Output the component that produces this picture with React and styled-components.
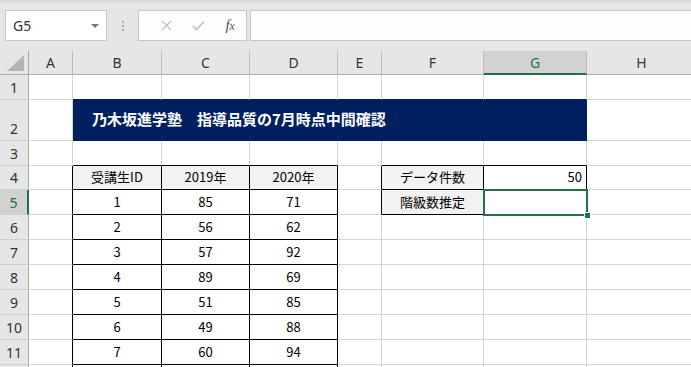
import React from "react";
import styled, { createGlobalStyle } from "styled-components";

const GRID = "#d4d4d4";
const BLACK = "#000";
const NAVY = "#002060";
const GREEN = "#217346";

const GlobalStyle = createGlobalStyle`
  body {
    margin: 0;
    background: #fff;
    font-family: "Noto Sans", "Noto Sans CJK JP", sans-serif;
    overflow: hidden;
  }
`;

const Page = styled.div`
  width: 691px;
  height: 367px;
  overflow: hidden;
  background: #fff;
`;

/* ---------- formula bar ---------- */

const Toolbar = styled.div`
  display: flex;
  align-items: stretch;
  height: 51px;
  box-sizing: border-box;
  padding: 10px 0 10px 5px;
  background: linear-gradient(#d8d8d8 0px, #e6e6e6 5px, #e6e6e6 100%);
`;

const NameBox = styled.div`
  width: 102px;
  box-sizing: border-box;
  border: 1px solid #c6c6c6;
  background: #fff;
  display: flex;
  align-items: center;
  justify-content: space-between;
  padding: 0 7px 0 7px;
  font-family: "Noto Sans", sans-serif;
  font-size: 14px;
  color: #333;
`;

const Arrow = styled.span`
  width: 0;
  height: 0;
  border-left: 4px solid transparent;
  border-right: 4px solid transparent;
  border-top: 4px solid #777;
`;

const Grip = styled.div`
  width: 31px;
  display: flex;
  flex-direction: column;
  align-items: center;
  justify-content: center;
  gap: 2px;
  span {
    width: 2px;
    height: 2px;
    background: #b0b0b0;
  }
`;

const FxBox = styled.div`
  width: 109px;
  box-sizing: border-box;
  border: 1px solid #c6c6c6;
  background: #fdfdfd;
  display: flex;
  align-items: center;
  padding: 0 0 0 12px;
`;

const FxSlot = styled.div`
  width: 35px;
  display: flex;
  justify-content: center;
  align-items: center;
`;

const FxText = styled.span`
  font-family: "Liberation Serif", serif;
  font-style: italic;
  font-size: 15px;
  color: #555;
  sub {
    font-size: 12px;
    vertical-align: 0;
  }
`;

const FormulaInput = styled.div`
  flex: 1;
  margin-left: 3px;
  margin-right: -2px;
  border: 1px solid #c6c6c6;
  background: #fdfdfd;
`;

/* ---------- sheet ---------- */

const colWidths = [29, 44, 89, 88, 88, 44, 102, 103, 110];
const colLabels = ["", "A", "B", "C", "D", "E", "F", "G", "H"];
const rowHeights = [25, 41, 25, 24, 25, 25, 25, 25, 25, 25, 25, 25];

const Sheet = styled.div`
  display: grid;
  grid-template-columns: ${(p) => p.$cols};
  grid-template-rows: ${(p) => p.$rows};
`;

const Corner = styled.div`
  position: relative;
  background: #e6e6e6;
  border-right: 1px solid #ababab;
  border-bottom: 1px solid #ababab;
  &::after {
    content: "";
    position: absolute;
    right: 4px;
    bottom: 3px;
    width: 0;
    height: 0;
    border-left: 17px solid transparent;
    border-bottom: 16px solid #b5b5b5;
  }
`;

const ColHead = styled.div`
  box-sizing: border-box;
  background: ${(p) => (p.$active ? "#d2d2d2" : "#e6e6e6")};
  border-right: 1px solid #bcbcbc;
  border-bottom: ${(p) => (p.$active ? `2px solid ${GREEN}` : "1px solid #ababab")};
  display: flex;
  align-items: center;
  justify-content: center;
  font-family: "Noto Sans", sans-serif;
  font-size: 14px;
  color: ${(p) => (p.$active ? GREEN : "#333")};
`;

const RowHead = styled.div`
  box-sizing: border-box;
  background: ${(p) => (p.$active ? "#d2d2d2" : "#e6e6e6")};
  border-right: ${(p) => (p.$active ? `2px solid ${GREEN}` : "1px solid #ababab")};
  border-bottom: 1px solid #cfcfcf;
  display: flex;
  align-items: flex-end;
  justify-content: center;
  padding-bottom: 2px;
  font-family: "Noto Sans", sans-serif;
  font-size: 14px;
  color: ${(p) => (p.$active ? GREEN : "#333")};
`;

const Cell = styled.div`
  box-sizing: border-box;
  position: relative;
  grid-column: span ${(p) => p.$span || 1};
  border-right: 1px solid ${(p) => p.$right};
  border-bottom: 1px solid ${(p) => p.$bottom};
  background: ${(p) => p.$bg || "#fff"};
  display: flex;
  align-items: flex-end;
  justify-content: ${(p) => p.$align || "center"};
  padding: 0 4px 3px;
  font-family: "Noto Sans CJK JP", sans-serif;
  font-size: 13px;
  color: #000;
  white-space: nowrap;
`;

const TitleCell = styled(Cell)`
  align-items: center;
  justify-content: flex-start;
  padding: 0 0 4px 19px;
  font-size: 15px;
  font-weight: bold;
  color: #fff;
`;

const Selection = styled.div`
  position: absolute;
  z-index: 2;
  left: -1px;
  top: -1px;
  right: -2px;
  bottom: -2px;
  border: 2px solid ${GREEN};
  &::after {
    content: "";
    position: absolute;
    right: -5px;
    bottom: -5px;
    width: 5px;
    height: 5px;
    background: ${GREEN};
    border: 1px solid #fff;
  }
`;

const values = {
  "4,2": "受講生ID",
  "4,3": "2019年",
  "4,4": "2020年",
  "4,6": "データ件数",
  "4,7": { text: "50", align: "flex-end" },
  "5,6": "階級数推定",
};

const scores = [
  [1, 85, 71],
  [2, 56, 62],
  [3, 57, 92],
  [4, 89, 69],
  [5, 51, 85],
  [6, 49, 88],
  [7, 60, 94],
];
scores.forEach((s, i) => {
  s.forEach((v, j) => {
    values[`${i + 5},${j + 2}`] = String(v);
  });
});

const boxed = (r, c) =>
  (r >= 4 && r <= 12 && c >= 2 && c <= 4) || (r >= 4 && r <= 5 && c >= 6 && c <= 7);
const shaded = (r, c) => (r === 4 && c >= 2 && c <= 4) || (c === 6 && (r === 4 || r === 5));
const inTitle = (r, c) => r === 2 && c >= 2 && c <= 7;

const App = () => {
  const rows = [];
  rowHeights.forEach((h, i) => {
    const r = i + 1;
    // the last row only peeks in at the bottom edge, its label is below the fold
    rows.push(
      <RowHead key={`h${r}`} $active={r === 5}>
        {r < rowHeights.length ? r : ""}
      </RowHead>
    );
    for (let c = 1; c <= 8; c++) {
      if (inTitle(r, c)) {
        if (c === 2) {
          rows.push(
            <TitleCell key={`${r},${c}`} $span={6} $bg={NAVY} $right={NAVY} $bottom={NAVY}>
              乃木坂進学塾　指導品質の7月時点中間確認
            </TitleCell>
          );
        }
        continue;
      }
      let bottom = GRID;
      if (inTitle(r + 1, c)) bottom = NAVY;
      else if (boxed(r, c) || boxed(r + 1, c)) bottom = BLACK;
      const right = boxed(r, c) || boxed(r, c + 1) ? BLACK : GRID;
      const v = values[`${r},${c}`];
      const text = typeof v === "object" ? v.text : v;
      const align = typeof v === "object" ? v.align : "center";
      rows.push(
        <Cell
          key={`${r},${c}`}
          $right={right}
          $bottom={bottom}
          $bg={shaded(r, c) ? "#f2f2f2" : "#fff"}
          $align={align}
        >
          {text}
          {r === 5 && c === 7 && <Selection />}
        </Cell>
      );
    }
  });

  return (
    <Page>
      <GlobalStyle />
      <Toolbar>
        <NameBox>
          G5
          <Arrow />
        </NameBox>
        <Grip>
          <span />
          <span />
          <span />
        </Grip>
        <FxBox>
          <FxSlot>
            <svg width="11" height="11" viewBox="0 0 11 11">
              <path d="M1 1 L10 10 M10 1 L1 10" stroke="#c4c4c4" strokeWidth="1.4" fill="none" />
            </svg>
          </FxSlot>
          <FxSlot>
            <svg width="13" height="11" viewBox="0 0 13 11">
              <path d="M1 6 L4.5 9.5 L12 1.5" stroke="#c4c4c4" strokeWidth="1.8" fill="none" />
            </svg>
          </FxSlot>
          <FxSlot>
            <FxText>
              f<sub>x</sub>
            </FxText>
          </FxSlot>
        </FxBox>
        <FormulaInput />
      </Toolbar>
      <Sheet
        $cols={colWidths.map((w) => `${w}px`).join(" ")}
        $rows={["24px", ...rowHeights.map((h) => `${h}px`)].join(" ")}
      >
        <Corner />
        {colLabels.slice(1).map((l) => (
          <ColHead key={l} $active={l === "G"}>
            {l}
          </ColHead>
        ))}
        {rows}
      </Sheet>
    </Page>
  );
};

export default App;
